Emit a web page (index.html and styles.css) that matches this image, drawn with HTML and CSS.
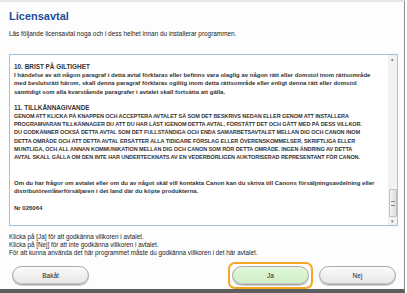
FILE: index.html
```html
<!DOCTYPE html>
<html lang="sv">
<head>
    <meta charset="UTF-8">
    <title>Licensavtal</title>
    <link rel="stylesheet" href="styles.css">
</head>
<body>
    <div class="window">
        <h1 class="title">Licensavtal</h1>
        <p class="intro">Läs följande licensavtal noga och i dess helhet innan du installerar programmen.</p>

        <div class="license">
            <div class="license-text">
                <p><span class="heading">10. BRIST PÅ GILTIGHET</span><br>
                I händelse av att någon paragraf i detta avtal förklaras eller befinns vara olaglig av någon rätt eller domstol inom rättsområde<br>
                med beslutsrätt härom, skall denna paragraf förklaras ogiltig inom detta rättsområde eller enligt denna rätt eller domstol<br>
                samtidigt som alla kvarstående paragrafer i avtalet skall fortsätta att gälla.</p>
                <p><span class="heading">11. TILLKÄNNAGIVANDE</span><br>
                <span class="caps">GENOM ATT KLICKA PÅ KNAPPEN OCH ACCEPTERA AVTALET SÅ SOM DET BESKRIVS NEDAN ELLER GENOM ATT INSTALLERA<br>
                PROGRAMVARAN TILLKÄNNAGER DU ATT DU HAR LÄST IGENOM DETTA AVTAL, FÖRSTÅTT DET OCH GÅTT MED PÅ DESS VILLKOR.<br>
                DU GODKÄNNER OCKSÅ DETTA AVTAL SOM DET FULLSTÄNDIGA OCH ENDA SAMARBETSAVTALET MELLAN DIG OCH CANON INOM<br>
                DETTA OMRÅDE OCH ATT DETTA AVTAL ERSÄTTER ALLA TIDIGARE FÖRSLAG ELLER ÖVERENSKOMMELSER, SKRIFTLIGA ELLER<br>
                MUNTLIGA, OCH ALL ANNAN KOMMUNIKATION MELLAN DIG OCH CANON SOM RÖR DETTA OMRÅDE. INGEN ÄNDRING AV DETTA<br>
                AVTAL SKALL GÄLLA OM DEN INTE HAR UNDERTECKNATS AV EN VEDERBÖRLIGEN AUKTORISERAD REPRESENTANT FÖR CANON.</span></p>
                <p class="gap">Om du har frågor om avtalet eller om du av något skäl vill kontakta Canon kan du skriva till Canons försäljningsavdelning eller<br>
                distributören/återförsäljaren i det land där du köpte produkterna.</p>
                <p>Nr 026064</p>
            </div>
            <div class="scrollbar">
                <span class="arrow">&#9652;</span>
                <span class="thumb"><span class="grip"></span></span>
                <span class="arrow">&#9662;</span>
            </div>
        </div>

        <div class="notes">
            Klicka på [Ja] för att godkänna villkoren i avtalet.<br>
            Klicka på [Nej] för att inte godkänna villkoren i avtalet.<br>
            För att kunna använda det här programmet måste du godkänna villkoren i det här avtalet.
        </div>

        <div class="buttons">
            <button class="button">Bakåt</button>
            <span class="spacer"></span>
            <span class="focus"><button class="button button-yes">Ja</button></span>
            <button class="button">Nej</button>
        </div>
    </div>
</body>
</html>
```

FILE: styles.css
```css
body {
    margin: 0;
    background-color: #fff;
    font-family: 'Liberation Sans', Arial, sans-serif;
}

.window {
    width: 389px;
    height: 287px;
    border-top: 2px solid #e6e6e6;
    border-right: 1px solid #8c8c8c;
    border-bottom: 4px solid #5e5e5e;
    background-color: #fdfdfd;
    display: flex;
    flex-direction: column;
    padding: 0 6px 0 9px;
}

.title {
    margin: 8px 0 0;
    font-size: 11px;
    font-weight: bold;
    color: #1d4f9e;
    line-height: 12px;
}

.intro {
    margin: 8px 0 0;
    font-size: 6.4px;
    line-height: 8px;
    color: #222;
}

.license {
    margin-top: 16px;
    height: 170px;
    border: 1px solid #9cc3e2;
    background-color: #fff;
    display: flex;
}

.license-text {
    flex: 1;
    padding: 8px 4px 0;
    font-size: 6px;
    line-height: 8.2px;
    font-weight: bold;
    color: #333;
    overflow: hidden;
    white-space: nowrap;
}

.license-text p {
    margin: 0 0 8px;
}

.license-text .heading {
    font-size: 6.4px;
}

.license-text .caps {
    font-size: 5.5px;
    letter-spacing: -0.08px;
}

.license-text .gap {
    margin-top: 18px;
}

.scrollbar {
    width: 9px;
    background-color: #f2f2f2;
    display: flex;
    flex-direction: column;
    align-items: center;
    justify-content: space-between;
    font-size: 5px;
    color: #777;
}

.arrow {
    height: 8px;
    line-height: 8px;
}

.thumb {
    margin-top: auto;
    width: 8px;
    height: 28px;
    border: 1px solid #c2c2c2;
    border-radius: 1px;
    background: linear-gradient(to right, #f4f4f4, #dcdcdc);
    box-sizing: border-box;
    display: flex;
    align-items: center;
    justify-content: center;
}

.grip {
    width: 4px;
    height: 3px;
    border-top: 1px solid #888;
    border-bottom: 1px solid #888;
}

.notes {
    margin-top: 7px;
    font-size: 6.3px;
    line-height: 8px;
    color: #222;
}

.buttons {
    margin-top: 5px;
    display: flex;
    align-items: center;
    padding: 0 2px 0 3px;
}

.button {
    width: 77px;
    height: 19px;
    border: 1px solid #a9a9a9;
    border-radius: 10px;
    background: linear-gradient(#fafafa, #e6e6e6);
    box-shadow: inset 0 -1px 0 #c8c8c8, 0 1px 0 #cfcfcf;
    font-family: 'Liberation Sans', Arial, sans-serif;
    font-size: 6.5px;
    color: #222;
    padding: 0;
}

.button-yes {
    background: linear-gradient(#e2f6dc, #cdeec3);
}

.spacer {
    flex: 1;
}

.focus {
    display: flex;
    padding: 2px;
    border: 2px solid #f5a623;
    border-radius: 7px;
    margin-right: 6px;
}
```
